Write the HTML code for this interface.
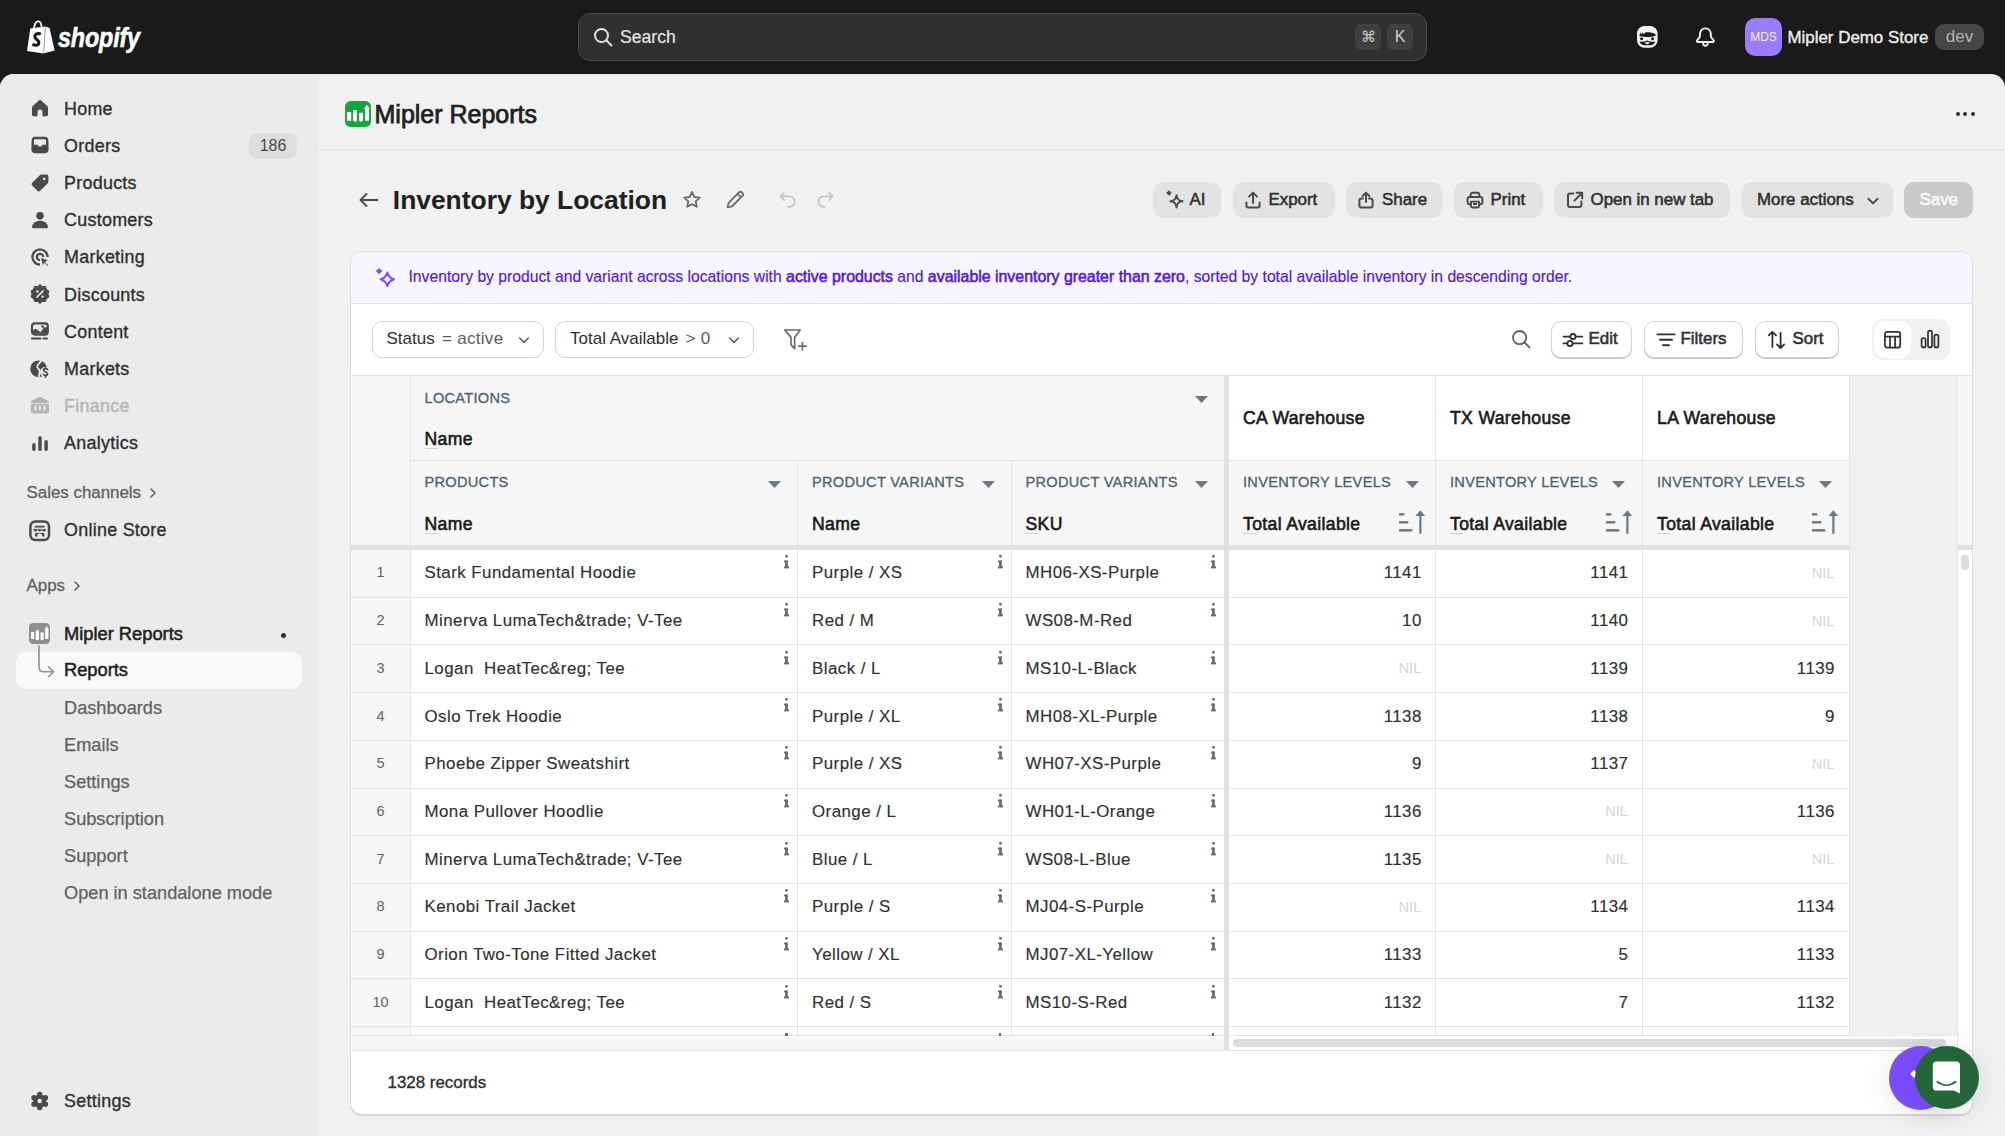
<!DOCTYPE html>
<html><head><meta charset="utf-8">
<style>
*{box-sizing:border-box;margin:0;padding:0}
html,body{width:2005px;height:1136px;overflow:hidden;background:#1a1a1a;font-family:"Liberation Sans",sans-serif;color:#303030}
.a{position:absolute;white-space:nowrap}
svg{display:block}
#top{position:absolute;left:0;top:0;width:2005px;height:74px;background:#1a1a1a}
#frame{position:absolute;left:0;top:74px;width:2005px;height:1062px;background:#f1f1f1;border-radius:14px 14px 0 0;overflow:hidden;box-shadow:inset 0 2px 3px rgba(0,0,0,0.035)}
#side{position:absolute;left:0;top:0;width:318px;height:1062px;background:#ebebeb}
.nav{position:absolute;left:64px;font-size:17.9px;letter-spacing:0.28px;color:#303030;line-height:20px;-webkit-text-stroke:0.35px currentColor}
.nav.b{font-size:18.3px;letter-spacing:0;-webkit-text-stroke:0.5px currentColor;color:#202020}
.sub{position:absolute;left:64px;font-size:18.2px;color:#616161;line-height:20px;-webkit-text-stroke:0.25px currentColor}
.ico{position:absolute;left:30px}
.btn{position:absolute;top:182px;height:36px;border-radius:10px;background:#e3e3e3}
.btn span{position:absolute;top:8px;font-size:16.9px;color:#303030;line-height:20px;white-space:nowrap;-webkit-text-stroke:0.55px currentColor}
.pill{position:absolute;top:321px;height:37px;border-radius:10px;background:#fff;border:1px solid #d4d4d4}
.pill>span{position:absolute;top:6.8px;font-size:17px;color:#303030;line-height:20px;white-space:nowrap}
.pill>span>span{margin-left:2.5px;color:#5c5c5c;letter-spacing:0.3px}
.obtn{position:absolute;top:321px;height:36.5px;border-radius:10px;background:#fff;border:1px solid #d4d4d4;box-shadow:0 1px 0 #bdbdbd}
.obtn>span{position:absolute;top:7px;font-size:16.9px;color:#303030;line-height:20px;white-space:nowrap;-webkit-text-stroke:0.55px currentColor}
#banner b{font-weight:400;font-size:15.9px;-webkit-text-stroke:0.55px currentColor}
</style></head><body>
<div id="top">
  <!-- logo -->
  <svg class="a" style="left:26px;top:20px" width="30" height="34" viewBox="0 0 30 34">
    <path d="M1 31 L4.2 9.2 C4.4 8.6 4.8 8.3 5.4 8.2 L19.4 6.4 L23.6 8 L28.6 30.6 L17.4 33.6 Z" fill="#fff"/>
    <path d="M19.4 6.6 L17.6 33.4" stroke="#9a9a9a" stroke-width="1"/>
    <path d="M7.8 9 C8.6 3.6 10.6 1.2 12.6 1.4 C14.4 1.6 15.4 3.6 15.6 7.6" fill="none" stroke="#fff" stroke-width="1.8"/>
    <path d="M10.8 4.2 C11.4 3 12 2.6 12.6 3" fill="none" stroke="#1a1a1a" stroke-width="0.8"/>
    <path d="M14.8 14.2 C13.2 13.2 9 13.2 8.8 16.4 C8.6 19.6 13.2 19.6 12.8 23 C12.5 25.6 9.2 25.8 6.4 24.2" fill="none" stroke="#1a1a1a" stroke-width="3"/>
  </svg>
  <div class="a" style="left:58px;top:21.5px;font-size:27.5px;line-height:normal;font-weight:700;font-style:italic;color:#fff;letter-spacing:-0.2px;transform:scaleX(0.85);transform-origin:0 0;-webkit-text-stroke:0.6px #fff">shopify</div>
  <!-- search -->
  <div class="a" style="left:578px;top:13px;width:849px;height:48px;border-radius:12px;background:#303030;border:1.5px solid #4a4a4a"></div>
  <svg class="a" style="left:593px;top:27px" width="20" height="20" viewBox="0 0 20 20"><circle cx="8.5" cy="8.5" r="6.5" fill="none" stroke="#e3e3e3" stroke-width="2"/><path d="M13.3 13.3 L18.5 18.5" stroke="#e3e3e3" stroke-width="2" stroke-linecap="round"/></svg>
  <div class="a" style="left:620px;top:27.2px;font-size:17.6px;color:#e3e3e3;line-height:20px;-webkit-text-stroke:0.2px currentColor">Search</div>
  <div class="a" style="left:1355px;top:24px;width:26px;height:26px;border-radius:6px;background:#3f3f3f;color:#cfcfcf;font-size:15px;text-align:center;line-height:26px">&#8984;</div>
  <div class="a" style="left:1387px;top:24px;width:26px;height:26px;border-radius:6px;background:#3f3f3f;color:#cfcfcf;font-size:16px;text-align:center;line-height:26px">K</div>
  <!-- right icons -->
  <svg class="a" style="left:1636.5px;top:26px" width="21" height="22" viewBox="0 0 21 22">
    <rect x="0" y="0" width="20.6" height="21.8" rx="7.5" fill="#f2f2f2"/>
    <path d="M2.3 10 L3.2 6.6 L4.4 8.4 L5.6 6.4 L6.6 8.2 L8.4 6.4 C12 6.2 16 6.6 18.4 8 L18.6 9.8 C16 10.8 13.4 11.2 10.6 11 C7.6 10.8 5 10.6 2.3 10Z" fill="#1a1a1a"/>
    <circle cx="4.6" cy="12.8" r="1.5" fill="#1a1a1a"/><circle cx="15.6" cy="12.8" r="1.5" fill="#1a1a1a"/>
    <path d="M2.6 15.4 C5.6 16 8 15.6 10.3 14.4 C12.6 15.6 15 16 18 15.4 C17.6 18.4 15 19.2 10.3 19.2 C5.6 19.2 3 18.4 2.6 15.4Z" fill="#1a1a1a"/>
    <path d="M7.8 16.6 Q10.3 15.6 12.8 16.6 Q12 18.2 10.3 18.2 Q8.6 18.2 7.8 16.6Z" fill="#f2f2f2"/>
  </svg>
  <svg class="a" style="left:1694px;top:26px" width="23" height="23" viewBox="0 0 23 23">
    <path d="M11.4 2.4 C8 2.4 6 5 6 8.4 L6 9.4 C6 11 5.4 12 4.2 13.2 L3.4 14 C2.4 15 2.9 16 4.2 16 L18.6 16 C19.9 16 20.4 15 19.4 14 L18.6 13.2 C17.4 12 16.8 11 16.8 9.4 L16.8 8.4 C16.8 5 14.8 2.4 11.4 2.4Z" fill="none" stroke="#f2f2f2" stroke-width="1.9" stroke-linejoin="round"/>
    <path d="M8.9 16.6 C8.9 18.6 10 19.8 11.4 19.8 C12.8 19.8 13.9 18.6 13.9 16.6" fill="none" stroke="#f2f2f2" stroke-width="1.9"/>
  </svg>
  <div class="a" style="left:1745px;top:18px;width:37px;height:38px;border-radius:10px;background:#9a7cff;color:#f4f0ff;font-size:12px;text-align:center;line-height:39px">MDS</div>
  <div class="a" style="left:1787.5px;top:28px;font-size:16.9px;color:#f0f0f0;line-height:20px;-webkit-text-stroke:0.35px currentColor">Mipler Demo Store</div>
  <div class="a" style="left:1935px;top:24px;width:49px;height:26px;border-radius:9px;background:#464646;color:#b5b5b5;font-size:17px;text-align:center;line-height:25px">dev</div>
</div>

<div id="frame">
 <div id="side">
<div class="nav" style="top:24.5px;color:#303030">Home</div>
<svg class="ico" style="top:24.2px" width="20" height="20" viewBox="0 0 20 20"><path d="M10 1.6 L17.2 8 C17.7 8.4 18 9 18 9.7 L18 16.6 C18 17.5 17.3 18.2 16.4 18.2 L12.4 18.2 L12.4 13.8 C12.4 12.5 11.4 11.6 10 11.6 C8.6 11.6 7.6 12.5 7.6 13.8 L7.6 18.2 L3.6 18.2 C2.7 18.2 2 17.5 2 16.6 L2 9.7 C2 9 2.3 8.4 2.8 8 Z" fill="#4a4a4a"/></svg>
<div class="nav" style="top:61.7px;color:#303030">Orders</div>
<svg class="ico" style="top:61.4px" width="20" height="20" viewBox="0 0 20 20"><path d="M5 1.8 L15 1.8 C16.8 1.8 18.2 3.2 18.4 5 L18.6 14.6 C18.6 16.7 17 18.3 15 18.3 L5 18.3 C3 18.3 1.4 16.7 1.4 14.6 L1.6 5 C1.8 3.2 3.2 1.8 5 1.8Z M4 9.8 L7.6 9.8 L8.8 11.6 L11.2 11.6 L12.4 9.8 L16 9.8 L16 5.6 C16 4.8 15.4 4.2 14.6 4.2 L5.4 4.2 C4.6 4.2 4 4.8 4 5.6Z" fill="#4a4a4a" fill-rule="evenodd"/></svg>
<div class="nav" style="top:98.9px;color:#303030">Products</div>
<svg class="ico" style="top:98.6px" width="20" height="20" viewBox="0 0 20 20"><path d="M11.4 1.6 L16.6 1.6 C17.6 1.6 18.4 2.4 18.4 3.4 L18.4 8.6 C18.4 9.3 18.1 9.9 17.6 10.4 L10.2 17.8 C9.4 18.6 8.2 18.6 7.4 17.8 L2.2 12.6 C1.4 11.8 1.4 10.6 2.2 9.8 L9.6 2.4 C10.1 1.9 10.7 1.6 11.4 1.6Z M14.2 4.6 A1.2 1.2 0 1 0 14.21 4.6Z" fill="#4a4a4a" fill-rule="evenodd"/></svg>
<div class="nav" style="top:136.1px;color:#303030">Customers</div>
<svg class="ico" style="top:135.8px" width="20" height="20" viewBox="0 0 20 20"><circle cx="10" cy="5.8" r="3.7" fill="#4a4a4a"/><path d="M2 16.8 C2.6 13 6 10.8 10 10.8 C14 10.8 17.4 13 18 16.8 C18.1 17.6 17.6 18.2 16.8 18.2 L3.2 18.2 C2.4 18.2 1.9 17.6 2 16.8Z" fill="#4a4a4a"/></svg>
<div class="nav" style="top:173.3px;color:#303030">Marketing</div>
<svg class="ico" style="top:173.0px" width="20" height="20" viewBox="0 0 20 20"><path d="M10 17.6 A7.6 7.6 0 1 1 17.6 10" fill="none" stroke="#4a4a4a" stroke-width="2.3"/><path d="M10 13.2 A3.2 3.2 0 1 1 13.2 10" fill="none" stroke="#4a4a4a" stroke-width="2.3"/><path d="M10 10 L19.8 13.4 L15.8 15 L19.2 18.4 L17.8 19.8 L14.4 16.4 L12.8 20.2Z" fill="#4a4a4a" stroke="#ebebeb" stroke-width="1.2" stroke-linejoin="round"/></svg>
<div class="nav" style="top:210.5px;color:#303030">Discounts</div>
<svg class="ico" style="top:210.2px" width="20" height="20" viewBox="0 0 20 20"><path d="M10 0.6 L12.4 2.6 L15.5 2.4 L16.3 5.3 L19 7 L17.9 10 L19 13 L16.3 14.7 L15.5 17.6 L12.4 17.4 L10 19.4 L7.6 17.4 L4.5 17.6 L3.7 14.7 L1 13 L2.1 10 L1 7 L3.7 5.3 L4.5 2.4 L7.6 2.6Z" fill="#4a4a4a" stroke="#4a4a4a" stroke-width="1" stroke-linejoin="round"/><path d="M7 13 L13 7" stroke="#ebebeb" stroke-width="1.7" stroke-linecap="round"/><circle cx="7.4" cy="7.4" r="1.2" fill="#ebebeb"/><circle cx="12.6" cy="12.6" r="1.2" fill="#ebebeb"/></svg>
<div class="nav" style="top:247.7px;color:#303030">Content</div>
<svg class="ico" style="top:247.4px;left:30px" width="20" height="20" viewBox="0 0 20 20"><rect x="2" y="2.4" width="15.8" height="11.2" rx="2.8" fill="none" stroke="#4a4a4a" stroke-width="2.2"/><path d="M2.6 12.8 L2.6 9.8 Q4.6 6.6 7.4 8.8 L10.4 11.2 L13.8 6.8 Q15.4 5.2 17.2 7.2 L17.2 12.8Z" fill="#4a4a4a"/><circle cx="12.6" cy="5.6" r="1.3" fill="#4a4a4a"/><rect x="0.9" y="16.4" width="10.6" height="2" rx="1" fill="#4a4a4a"/><rect x="12.4" y="16.4" width="5.6" height="2" rx="1" fill="#4a4a4a"/></svg>
<div class="nav" style="top:284.9px;color:#303030">Markets</div>
<svg class="ico" style="top:284.6px;left:30px" width="20" height="20" viewBox="0 0 20 20"><circle cx="8.6" cy="9.8" r="8.4" fill="#4a4a4a"/><path d="M11.6 1.6 C10 3.6 8.6 4.6 7.4 6.6 C6.4 8.4 8.6 9.4 9.4 11 C10.4 13 9 15.2 8.8 18.4" fill="none" stroke="#ebebeb" stroke-width="1.8"/><circle cx="15.4" cy="13.2" r="5.4" fill="#ebebeb"/><path d="M17.6 10.6 C17.2 10 16.4 9.7 15.5 9.7 C14.4 9.7 13.6 10.3 13.6 11.2 C13.6 13.3 17.6 12.6 17.6 14.8 C17.6 15.8 16.7 16.4 15.5 16.4 C14.5 16.4 13.7 16 13.3 15.4 M15.5 8.2 L15.5 9.7 M15.5 16.4 L15.5 18.2" fill="none" stroke="#4a4a4a" stroke-width="1.7" stroke-linecap="round"/></svg>
<div class="nav" style="top:322.1px;color:#b5b5b5">Finance</div>
<svg class="ico" style="top:321.8px;left:30px" width="20" height="20" viewBox="0 0 20 20"><path d="M9.9 0.8 L18.4 5 C18.8 5.2 19 5.6 19 6 L19 7 L0.8 7 L0.8 6 C0.8 5.6 1 5.2 1.4 5Z" fill="#b3b3b3"/><rect x="0.8" y="7.8" width="18.2" height="9.6" rx="2.2" fill="#b3b3b3"/><rect x="4.4" y="9.6" width="2.1" height="4.8" rx="0.6" fill="#ebebeb"/><rect x="8.85" y="9.6" width="2.1" height="4.8" rx="0.6" fill="#ebebeb"/><rect x="13.3" y="9.6" width="2.1" height="4.8" rx="0.6" fill="#ebebeb"/></svg>
<div class="nav" style="top:359.3px;color:#303030">Analytics</div>
<svg class="ico" style="top:359.0px" width="20" height="20" viewBox="0 0 20 20"><rect x="2.2" y="10" width="3.4" height="8" rx="1.7" fill="#4a4a4a"/><rect x="8.3" y="3" width="3.4" height="15" rx="1.7" fill="#4a4a4a"/><rect x="14.4" y="7" width="3.4" height="11" rx="1.7" fill="#4a4a4a"/></svg>
<div class="a" style="left:249px;top:59px;width:48px;height:26px;border-radius:9px;background:#dedede;color:#4a4a4a;font-size:16px;text-align:center;line-height:26px">186</div>
<div class="a" style="left:26.5px;top:410.1px;font-size:16.9px;color:#616161;line-height:18px;-webkit-text-stroke:0.3px currentColor">Sales channels</div>
<svg class="a" style="left:148px;top:412.6px" width="10" height="12" viewBox="0 0 10 12"><path d="M3 2 L7 6 L3 10" fill="none" stroke="#616161" stroke-width="1.6" stroke-linecap="round" stroke-linejoin="round"/></svg>
<div class="nav" style="top:445.8px">Online Store</div>
<svg class="ico" style="top:445.5px;left:29px" width="22" height="22" viewBox="0 0 22 22"><rect x="1.4" y="1.4" width="18.6" height="18.6" rx="5" fill="none" stroke="#4a4a4a" stroke-width="2.5"/><path d="M6.4 5.8 L15 5.8 L16.2 7.6 L5.2 7.6Z" fill="#4a4a4a"/><path d="M4.6 9.4 L8.2 9.4 Q8 11.2 6.4 11.2 Q4.8 11.2 4.6 9.4Z M9 9.4 L12.4 9.4 Q12.2 11.2 10.7 11.2 Q9.2 11.2 9 9.4Z M13.2 9.4 L16.8 9.4 Q16.6 11.2 15 11.2 Q13.4 11.2 13.2 9.4Z" fill="#4a4a4a" stroke="#4a4a4a" stroke-width="0.8"/><path d="M6 13.4 Q8 12 10.7 13.2 Q13.4 12 15.4 13.4 L15.4 16.6 L13 16.6 L13 14.8 Q13 13.8 10.7 13.8 Q8.4 13.8 8.4 14.8 L8.4 16.6 L6 16.6Z" fill="#4a4a4a"/></svg>
<div class="a" style="left:26.5px;top:503.0px;font-size:16.9px;color:#616161;line-height:18px;-webkit-text-stroke:0.3px currentColor">Apps</div>
<svg class="a" style="left:72px;top:505.5px" width="10" height="12" viewBox="0 0 10 12"><path d="M3 2 L7 6 L3 10" fill="none" stroke="#616161" stroke-width="1.6" stroke-linecap="round" stroke-linejoin="round"/></svg>
<div class="a" style="left:16px;top:578.3px;width:286px;height:37px;border-radius:10px;background:#fafafa"></div>
<div class="nav b" style="top:549.8px">Mipler Reports</div>
<svg class="ico" style="top:549px;left:29px" width="21" height="21" viewBox="0 0 21 21"><rect x="0" y="0" width="21" height="21" rx="4.2" fill="#8e8e8e"/><rect x="2" y="9.1" width="3.2" height="6.9" fill="#fff"/><path d="M6.7 7.2 L10 7.2 L10 16.6 L8.4 17.4 L6.7 16.6Z" fill="#fff"/><path d="M11.5 9.6 L14.7 9.6 L14.7 16.6 L13 17.4 L11.5 16.6Z" fill="#fff"/><rect x="16.1" y="7" width="3.3" height="9" fill="#fff"/><path d="M15.3 7.6 L17.75 3 L20.2 7.6Z" fill="#fff"/></svg>
<div class="a" style="left:281px;top:558.5px;width:5px;height:5px;border-radius:50%;background:#303030"></div>
<svg class="a" style="left:37px;top:571px" width="24" height="36" viewBox="0 0 24 36"><path d="M2 1 L2 22 C2 25 3.6 26.8 6.6 26.8 L16.4 26.8 M11.6 21.8 L16.6 26.8 L11.6 31.8" fill="none" stroke="#8f8f8f" stroke-width="1.6" stroke-linecap="round" stroke-linejoin="round"/></svg>
<div class="nav b" style="top:586.4px">Reports</div>
<div class="sub" style="top:623.8px">Dashboards</div>
<div class="sub" style="top:660.9px">Emails</div>
<div class="sub" style="top:698.0px">Settings</div>
<div class="sub" style="top:735.1px">Subscription</div>
<div class="sub" style="top:772.2px">Support</div>
<div class="sub" style="top:809.3px">Open in standalone mode</div>
<div class="nav" style="top:1017.3px">Settings</div>
<svg class="ico" style="top:1017.4px;left:30px" width="20" height="20" viewBox="0 0 20 20"><circle cx="9.7" cy="10" r="6.6" fill="#4a4a4a"/><circle cx="9.70" cy="3.40" r="2.7" fill="#4a4a4a"/><circle cx="3.98" cy="6.70" r="2.7" fill="#4a4a4a"/><circle cx="3.98" cy="13.30" r="2.7" fill="#4a4a4a"/><circle cx="9.70" cy="16.60" r="2.7" fill="#4a4a4a"/><circle cx="15.42" cy="13.30" r="2.7" fill="#4a4a4a"/><circle cx="15.42" cy="6.70" r="2.7" fill="#4a4a4a"/><circle cx="9.7" cy="10" r="2.2" fill="#ebebeb"/></svg>
 </div>
</div>

<div id="main">
<!-- app header -->
<svg class="a" style="left:345px;top:101px" width="26" height="26" viewBox="0 0 26 26"><rect x="0" y="0" width="26" height="26" rx="5.6" fill="#12a63c"/><rect x="1.9" y="11" width="4.3" height="8.7" fill="#fff"/><path d="M8 8.9 L12 8.9 L12 20 L10.3 21 L8 19.8Z" fill="#fff"/><path d="M14.2 11.7 L17.9 11.7 L17.9 19.8 L15.8 21 L14.2 20Z" fill="#fff"/><rect x="20" y="6.8" width="4" height="12.9" fill="#fff"/><path d="M18.8 7.8 L21.9 3.7 L25 7.8Z" fill="#fff"/></svg>
<div class="a" style="left:374.5px;top:99.5px;font-size:25px;color:#202020;line-height:28px;-webkit-text-stroke:0.75px currentColor">Mipler Reports</div>
<div class="a" style="left:1955.9px;top:111.9px;width:4px;height:4px;border-radius:50%;background:#303030"></div>
<div class="a" style="left:1963.2px;top:111.9px;width:4px;height:4px;border-radius:50%;background:#303030"></div>
<div class="a" style="left:1970.5px;top:111.9px;width:4px;height:4px;border-radius:50%;background:#303030"></div>
<div class="a" style="left:318px;top:149px;width:1687px;height:1px;background:#e3e3e3"></div>
<!-- title row -->
<svg class="a" style="left:358px;top:190px" width="22" height="20" viewBox="0 0 22 20"><path d="M19.5 10 L2.5 10 M8.5 4 L2.5 10 L8.5 16" fill="none" stroke="#4a4a4a" stroke-width="1.9" stroke-linecap="round" stroke-linejoin="round"/></svg>
<div class="a" style="left:392.8px;top:185px;font-size:26.4px;font-weight:700;color:#202020;line-height:30px">Inventory by Location</div>
<svg class="a" style="left:682px;top:190px" width="20" height="20" viewBox="0 0 20 20"><path d="M10 2 L12.3 7 L17.7 7.6 L13.7 11.3 L14.8 16.8 L10 14.1 L5.2 16.8 L6.3 11.3 L2.3 7.6 L7.7 7 Z" fill="none" stroke="#6b6b6b" stroke-width="1.8" stroke-linejoin="round"/></svg>
<svg class="a" style="left:725px;top:190px" width="20" height="20" viewBox="0 0 20 20"><path d="M13.6 2.6 C14.6 1.6 16.2 1.6 17.2 2.6 C18.2 3.6 18.2 5.2 17.2 6.2 L7.4 16 C7 16.4 6.6 16.6 6.1 16.7 L2.6 17.4 L3.3 13.9 C3.4 13.4 3.6 13 4 12.6Z M12.4 3.8 L16 7.4" fill="none" stroke="#6b6b6b" stroke-width="1.8" stroke-linejoin="round"/></svg>
<svg class="a" style="left:778px;top:190px" width="20" height="20" viewBox="0 0 20 20"><path d="M5.8 3 L2.6 6.4 L5.8 9.8 M2.8 6.4 L11.4 6.4 C14.4 6.4 16.6 8.6 16.6 11.6 C16.6 14.6 14.4 16.8 11.4 16.8 L10.4 16.8" fill="none" stroke="#c4c4c4" stroke-width="1.8" stroke-linecap="round" stroke-linejoin="round"/></svg>
<svg class="a" style="left:815px;top:190px" width="20" height="20" viewBox="0 0 20 20"><path d="M14.2 3 L17.4 6.4 L14.2 9.8 M17.2 6.4 L8.6 6.4 C5.6 6.4 3.4 8.6 3.4 11.6 C3.4 14.6 5.6 16.8 8.6 16.8 L9.6 16.8" fill="none" stroke="#c4c4c4" stroke-width="1.8" stroke-linecap="round" stroke-linejoin="round"/></svg>

<!-- action buttons -->
<div class="btn" style="left:1152.5px;width:68px"><svg width="20" height="22" viewBox="0 0 20 22" style="position:absolute;left:12px;top:7px"><path d="M4 1.2 L6.8 4 L4 6.8 L1.2 4Z" fill="#4a4a4a"/><path d="M11.5 6.2 C12 10.4 13.4 11.8 17.6 12.3 C13.4 12.8 12 14.2 11.5 18.4 C11 14.2 9.6 12.8 5.4 12.3 C9.6 11.8 11 10.4 11.5 6.2Z" fill="none" stroke="#4a4a4a" stroke-width="2" stroke-linejoin="round"/></svg><span style="left:37px">AI</span></div>
<div class="btn" style="left:1232.5px;width:102px"><svg width="20" height="20" viewBox="0 0 20 20" style="position:absolute;left:10px;top:8px"><path d="M10 13 L10 3 M6 6.6 L10 2.6 L14 6.6 M3.4 12.6 L3.4 15.4 C3.4 16.6 4.2 17.4 5.4 17.4 L14.6 17.4 C15.8 17.4 16.6 16.6 16.6 15.4 L16.6 12.6" fill="none" stroke="#4a4a4a" stroke-width="2" stroke-linecap="round" stroke-linejoin="round"/></svg><span style="left:36px">Export</span></div>
<div class="btn" style="left:1346px;width:96.5px"><svg width="20" height="20" viewBox="0 0 20 20" style="position:absolute;left:10px;top:8px"><path d="M10 12 L10 2.8 M6.6 6 L10 2.6 L13.4 6 M7 8.6 L5.4 8.6 C4.2 8.6 3.4 9.4 3.4 10.6 L3.4 15.4 C3.4 16.6 4.2 17.4 5.4 17.4 L14.6 17.4 C15.8 17.4 16.6 16.6 16.6 15.4 L16.6 10.6 C16.6 9.4 15.8 8.6 14.6 8.6 L13 8.6" fill="none" stroke="#4a4a4a" stroke-width="2" stroke-linecap="round" stroke-linejoin="round"/></svg><span style="left:36px">Share</span></div>
<div class="btn" style="left:1453.5px;width:89px"><svg width="20" height="20" viewBox="0 0 20 20" style="position:absolute;left:11px;top:8px"><path d="M5.6 7 L5.6 4.8 C5.6 3.6 6.4 2.8 7.6 2.8 L12.4 2.8 C13.6 2.8 14.4 3.6 14.4 4.8 L14.4 7 M5.6 14.2 L4.4 14.2 C3.2 14.2 2.6 13.4 2.6 12.2 L2.6 9.2 C2.6 8 3.4 7 4.6 7 L15.4 7 C16.6 7 17.4 8 17.4 9.2 L17.4 12.2 C17.4 13.4 16.8 14.2 15.6 14.2 L14.4 14.2 M6 11.6 L14 11.6 L14 16 C14 16.8 13.4 17.4 12.6 17.4 L7.4 17.4 C6.6 17.4 6 16.8 6 16Z M8 14 L12 14" fill="none" stroke="#4a4a4a" stroke-width="1.95" stroke-linejoin="round"/></svg><span style="left:37px">Print</span></div>
<div class="btn" style="left:1553.5px;width:176px"><svg width="20" height="20" viewBox="0 0 20 20" style="position:absolute;left:11px;top:8px"><path d="M8.4 3.6 L5 3.6 C3.8 3.6 3 4.4 3 5.6 L3 15 C3 16.2 3.8 17 5 17 L14.4 17 C15.6 17 16.4 16.2 16.4 15 L16.4 11.6 M11.6 2.8 L17.2 2.8 L17.2 8.4 M17 3 L9.4 10.6" fill="none" stroke="#4a4a4a" stroke-width="2" stroke-linecap="round" stroke-linejoin="round"/></svg><span style="left:37px">Open in new tab</span></div>
<div class="btn" style="left:1741px;width:151.5px"><span style="left:16px">More actions</span><svg width="16" height="16" viewBox="0 0 16 16" style="position:absolute;left:124px;top:11px"><path d="M3.4 5.8 L8 10.4 L12.6 5.8" fill="none" stroke="#4a4a4a" stroke-width="2" stroke-linecap="round" stroke-linejoin="round"/></svg></div>
<div class="btn" style="left:1904px;width:69px;background:#c9c9c9;color:#fff"><span style="left:15.5px;color:#fafafa">Save</span></div>

<!-- card -->
<div class="a" style="left:350px;top:251px;width:1623px;height:864px;border-radius:12px;background:#fff;border:1px solid #dedede;box-shadow:0 1px 0 #d4d4d4;overflow:hidden">
  <div class="a" style="left:0;top:0;width:1621px;height:52px;background:#f7f5ff;border-bottom:1px solid #e1e1e1"></div>
</div>
<svg class="a" style="left:370px;top:262px" width="28" height="28" viewBox="0 0 28 28"><path d="M9.1 5.9 L12.3 9.1 L9.1 12.3 L5.9 9.1Z" fill="#7b4dff"/><path d="M17.3 10.4 Q18.6 15.6 24 17.2 Q18.6 18.8 17.3 24 Q16 18.8 10.6 17.2 Q16 15.6 17.3 10.4Z" fill="none" stroke="#7b4dff" stroke-width="2" stroke-linejoin="round"/></svg>
<div class="a" id="banner" style="left:408.5px;top:268px;font-size:15.7px;color:#5417dc;line-height:18px;-webkit-text-stroke:0.15px currentColor">Inventory by product and variant across locations with <b>active products</b> and <b>available inventory greater than zero</b>, sorted by total available inventory in descending order.</div>
<!-- filter pills -->
<div class="pill" style="left:371.5px;width:172.5px"><span style="left:14px">Status <span style="position:static">= active</span></span><svg width="16" height="16" viewBox="0 0 16 16" style="position:absolute;left:143px;top:10px"><path d="M3.6 6 L8 10.4 L12.4 6" fill="none" stroke="#616161" stroke-width="1.6" stroke-linecap="round" stroke-linejoin="round"/></svg></div>
<div class="pill" style="left:555px;width:199px"><span style="left:14px">Total Available <span style="position:static">&gt; 0</span></span><svg width="16" height="16" viewBox="0 0 16 16" style="position:absolute;left:170px;top:10px"><path d="M3.6 6 L8 10.4 L12.4 6" fill="none" stroke="#616161" stroke-width="1.6" stroke-linecap="round" stroke-linejoin="round"/></svg></div>
<svg class="a" style="left:782px;top:327px" width="26" height="26" viewBox="0 0 26 26"><path d="M2.8 3 L18.2 3 L12.6 10.4 L12.6 21.6 L9 17.8 L9 10.4Z" fill="none" stroke="#6b6b6b" stroke-width="1.7" stroke-linejoin="round"/><path d="M20.4 15 L20.4 23.4 M16.2 19.2 L24.6 19.2" stroke="#6b6b6b" stroke-width="1.7"/></svg>
<!-- right controls -->
<svg class="a" style="left:1510px;top:328px" width="22" height="22" viewBox="0 0 22 22"><circle cx="9.6" cy="9.6" r="6.6" fill="none" stroke="#616161" stroke-width="1.8"/><path d="M14.4 14.4 L19.4 19.4" stroke="#616161" stroke-width="1.8" stroke-linecap="round"/></svg>
<div class="obtn" style="left:1550.5px;width:81px"><svg width="22" height="22" viewBox="0 0 22 22" style="position:absolute;left:10px;top:7px"><path d="M1.6 7.6 L8 7.6 M13.8 7.6 L20.4 7.6 M1.6 14.4 L5 14.4 M10.8 14.4 L20.4 14.4" stroke="#303030" stroke-width="1.8" stroke-linecap="round"/><circle cx="11" cy="7.6" r="2.6" fill="none" stroke="#303030" stroke-width="1.8"/><circle cx="8" cy="14.4" r="2.6" fill="none" stroke="#303030" stroke-width="1.8"/></svg><span style="left:37px">Edit</span></div>
<div class="obtn" style="left:1643.5px;width:99px"><svg width="22" height="22" viewBox="0 0 22 22" style="position:absolute;left:10px;top:7px"><path d="M2.4 5.4 L19.6 5.4 M5 10.8 L17 10.8 M8 16.2 L14 16.2" stroke="#303030" stroke-width="1.9" stroke-linecap="round"/></svg><span style="left:36px">Filters</span></div>
<div class="obtn" style="left:1754.5px;width:84px"><svg width="22" height="22" viewBox="0 0 22 22" style="position:absolute;left:10.5px;top:7px"><path d="M6.4 18 L6.4 2.8 M2.8 6.4 L6.4 2.8 L10 6.4 M14.6 3.8 L14.6 19 M11 15.4 L14.6 19 L18.2 15.4" fill="none" stroke="#303030" stroke-width="1.8" stroke-linecap="round" stroke-linejoin="round"/></svg><span style="left:37px">Sort</span></div>
<div class="a" style="left:1871.5px;top:318.5px;width:78.5px;height:41.5px;border-radius:11px;background:#f1f1f1"></div>
<div class="a" style="left:1873.5px;top:320.5px;width:37.5px;height:37.5px;border-radius:10px;background:#fff"></div>
<svg class="a" style="left:1881px;top:328px" width="22" height="22" viewBox="0 0 22 22"><rect x="3.9" y="3.9" width="15.3" height="15.6" rx="2.3" fill="none" stroke="#303030" stroke-width="1.75"/><path d="M3.9 8.6 L19.2 8.6 M9 8.6 L9 19.5 M14.1 8.6 L14.1 19.5" stroke="#303030" stroke-width="1.75"/></svg>
<svg class="a" style="left:1919px;top:328px" width="22" height="22" viewBox="0 0 22 22"><rect x="2.6" y="10" width="4" height="9.4" rx="2" fill="none" stroke="#303030" stroke-width="1.7"/><rect x="9" y="2.6" width="4" height="16.8" rx="2" fill="none" stroke="#303030" stroke-width="1.7"/><rect x="15.4" y="6.6" width="4" height="12.8" rx="2" fill="none" stroke="#303030" stroke-width="1.7"/></svg>
<!--TABLE-->
<div class="a" style="left:351px;top:376px;width:873px;height:169px;background:#f7f7f7;"></div>
<div class="a" style="left:1229px;top:461px;width:620px;height:84px;background:#f7f7f7;"></div>
<div class="a" style="left:1849px;top:376px;width:109px;height:660px;background:#f0f0f0;"></div>
<div class="a" style="left:1958px;top:376px;width:14px;height:169px;background:#f7f7f7;"></div>
<div class="a" style="left:351px;top:550px;width:59px;height:486px;background:#f7f7f7;"></div>
<div class="a" style="left:351px;top:1036px;width:873px;height:14px;background:#f7f7f7;"></div>
<div class="a" style="left:351px;top:375px;width:1621px;height:1px;background:#e3e3e3;"></div>
<div class="a" style="left:410px;top:376px;width:1px;height:660px;background:#e3e3e3;"></div>
<div class="a" style="left:411px;top:460px;width:813px;height:1px;background:#e3e3e3;"></div>
<div class="a" style="left:1229px;top:460px;width:620px;height:1px;background:#e3e3e3;"></div>
<div class="a" style="left:797px;top:461px;width:1px;height:575px;background:#e3e3e3;"></div>
<div class="a" style="left:1011px;top:461px;width:1px;height:575px;background:#e3e3e3;"></div>
<div class="a" style="left:1224px;top:376px;width:5px;height:674px;background:#e1e1e1;"></div>
<div class="a" style="left:1435px;top:376px;width:1px;height:660px;background:#e3e3e3;"></div>
<div class="a" style="left:1642px;top:376px;width:1px;height:660px;background:#e3e3e3;"></div>
<div class="a" style="left:1849px;top:376px;width:1px;height:660px;background:#e3e3e3;"></div>
<div class="a" style="left:1957px;top:376px;width:1px;height:674px;background:#e6e6e6;"></div>
<div class="a" style="left:351px;top:545px;width:1498px;height:5px;background:#e1e1e1;"></div>
<div class="a" style="left:1958px;top:545px;width:14px;height:5px;background:#e1e1e1;"></div>
<div class="a" style="left:351px;top:596.7px;width:1498px;height:1px;background:#e3e3e3;"></div>
<div class="a" style="left:351px;top:644.4px;width:1498px;height:1px;background:#e3e3e3;"></div>
<div class="a" style="left:351px;top:692.1px;width:1498px;height:1px;background:#e3e3e3;"></div>
<div class="a" style="left:351px;top:739.8px;width:1498px;height:1px;background:#e3e3e3;"></div>
<div class="a" style="left:351px;top:787.5px;width:1498px;height:1px;background:#e3e3e3;"></div>
<div class="a" style="left:351px;top:835.2px;width:1498px;height:1px;background:#e3e3e3;"></div>
<div class="a" style="left:351px;top:882.9px;width:1498px;height:1px;background:#e3e3e3;"></div>
<div class="a" style="left:351px;top:930.6px;width:1498px;height:1px;background:#e3e3e3;"></div>
<div class="a" style="left:351px;top:978.3px;width:1498px;height:1px;background:#e3e3e3;"></div>
<div class="a" style="left:351px;top:1026.0px;width:1498px;height:1px;background:#e3e3e3;"></div>
<div class="a" style="left:351px;top:1035px;width:1498px;height:1px;background:#e3e3e3;"></div>
<div class="a" style="left:351px;top:1050px;width:1621px;height:1px;background:#e3e3e3;"></div>
<div class="a" style="left:1233px;top:1039.3px;width:713px;height:7.8px;background:#dcdde0;border-radius:4px"></div>
<div class="a" style="left:1961.3px;top:554.5px;width:7.6px;height:15px;background:#dcdde0;border-radius:4px"></div>
<div class="a" style="left:424.5px;top:387.6px;font-size:14.6px;line-height:20px;color:#4d5f72;font-weight:400;letter-spacing:0.28px;-webkit-text-stroke:0.3px currentColor">LOCATIONS</div>
<svg class="a" style="left:1194.5px;top:396px" width="13" height="7" viewBox="0 0 13 7"><path d="M0 0 L13 0 L6.5 7Z" fill="#6d7882"/></svg>
<div class="a" style="left:424.5px;top:428.8px;font-size:17.6px;line-height:20px;color:#1a1a1a;font-weight:400;letter-spacing:0.35px;-webkit-text-stroke:0.6px currentColor">Name</div>
<div class="a" style="left:424.5px;top:447.5px;width:13px;height:1.5px;background:#d0d0d0;"></div>
<div class="a" style="left:1243px;top:408.2px;font-size:17.6px;line-height:20px;color:#1a1a1a;font-weight:400;letter-spacing:0.35px;-webkit-text-stroke:0.6px currentColor">CA Warehouse</div>
<div class="a" style="left:1450px;top:408.2px;font-size:17.6px;line-height:20px;color:#1a1a1a;font-weight:400;letter-spacing:0.35px;-webkit-text-stroke:0.6px currentColor">TX Warehouse</div>
<div class="a" style="left:1657px;top:408.2px;font-size:17.6px;line-height:20px;color:#1a1a1a;font-weight:400;letter-spacing:0.35px;-webkit-text-stroke:0.6px currentColor">LA Warehouse</div>
<div class="a" style="left:424.5px;top:472.2px;font-size:14.6px;line-height:20px;color:#4d5f72;font-weight:400;letter-spacing:0.28px;-webkit-text-stroke:0.3px currentColor">PRODUCTS</div>
<svg class="a" style="left:768.0px;top:481px" width="13" height="7" viewBox="0 0 13 7"><path d="M0 0 L13 0 L6.5 7Z" fill="#6d7882"/></svg>
<div class="a" style="left:812px;top:472.2px;font-size:14.6px;line-height:20px;color:#4d5f72;font-weight:400;letter-spacing:0.28px;-webkit-text-stroke:0.3px currentColor">PRODUCT VARIANTS</div>
<svg class="a" style="left:981.6px;top:481px" width="13" height="7" viewBox="0 0 13 7"><path d="M0 0 L13 0 L6.5 7Z" fill="#6d7882"/></svg>
<div class="a" style="left:1025.5px;top:472.2px;font-size:14.6px;line-height:20px;color:#4d5f72;font-weight:400;letter-spacing:0.28px;-webkit-text-stroke:0.3px currentColor">PRODUCT VARIANTS</div>
<svg class="a" style="left:1194.6px;top:481px" width="13" height="7" viewBox="0 0 13 7"><path d="M0 0 L13 0 L6.5 7Z" fill="#6d7882"/></svg>
<div class="a" style="left:424.5px;top:513.8px;font-size:17.6px;line-height:20px;color:#1a1a1a;font-weight:400;letter-spacing:0.35px;-webkit-text-stroke:0.6px currentColor">Name</div>
<div class="a" style="left:424.5px;top:532.5px;width:13px;height:1.5px;background:#d0d0d0;"></div>
<div class="a" style="left:812px;top:513.8px;font-size:17.6px;line-height:20px;color:#1a1a1a;font-weight:400;letter-spacing:0.35px;-webkit-text-stroke:0.6px currentColor">Name</div>
<div class="a" style="left:1025.5px;top:513.8px;font-size:17.6px;line-height:20px;color:#1a1a1a;font-weight:400;letter-spacing:0.35px;-webkit-text-stroke:0.6px currentColor">SKU</div>
<div class="a" style="left:1025.5px;top:532.5px;width:13px;height:1.5px;background:#d0d0d0;"></div>
<div class="a" style="left:1243px;top:472.2px;font-size:14.6px;line-height:20px;color:#4d5f72;font-weight:400;letter-spacing:0.28px;-webkit-text-stroke:0.3px currentColor">INVENTORY LEVELS</div>
<svg class="a" style="left:1405.6px;top:481px" width="13" height="7" viewBox="0 0 13 7"><path d="M0 0 L13 0 L6.5 7Z" fill="#6d7882"/></svg>
<div class="a" style="left:1243px;top:513.8px;font-size:17.6px;line-height:20px;color:#1a1a1a;font-weight:400;letter-spacing:0.35px;-webkit-text-stroke:0.6px currentColor">Total Available</div>
<div class="a" style="left:1243px;top:532.5px;width:13px;height:1.5px;background:#d0d0d0;"></div>
<svg class="a" style="left:1398.9px;top:510px" width="28" height="24" viewBox="0 0 28 24"><rect x="0" y="3.1" width="5.3" height="2.5" fill="#6d7882"/><rect x="0" y="11.1" width="9.3" height="2.4" fill="#6d7882"/><rect x="0" y="19.1" width="13.3" height="2.5" fill="#6d7882"/><rect x="20.3" y="4" width="2.2" height="19.7" fill="#6d7882"/><path d="M16.3 5.9 L21.4 0.3 L26.2 5.9Z" fill="#6d7882"/></svg>
<div class="a" style="left:1450px;top:472.2px;font-size:14.6px;line-height:20px;color:#4d5f72;font-weight:400;letter-spacing:0.28px;-webkit-text-stroke:0.3px currentColor">INVENTORY LEVELS</div>
<svg class="a" style="left:1612.2px;top:481px" width="13" height="7" viewBox="0 0 13 7"><path d="M0 0 L13 0 L6.5 7Z" fill="#6d7882"/></svg>
<div class="a" style="left:1450px;top:513.8px;font-size:17.6px;line-height:20px;color:#1a1a1a;font-weight:400;letter-spacing:0.35px;-webkit-text-stroke:0.6px currentColor">Total Available</div>
<div class="a" style="left:1450px;top:532.5px;width:13px;height:1.5px;background:#d0d0d0;"></div>
<svg class="a" style="left:1605.5px;top:510px" width="28" height="24" viewBox="0 0 28 24"><rect x="0" y="3.1" width="5.3" height="2.5" fill="#6d7882"/><rect x="0" y="11.1" width="9.3" height="2.4" fill="#6d7882"/><rect x="0" y="19.1" width="13.3" height="2.5" fill="#6d7882"/><rect x="20.3" y="4" width="2.2" height="19.7" fill="#6d7882"/><path d="M16.3 5.9 L21.4 0.3 L26.2 5.9Z" fill="#6d7882"/></svg>
<div class="a" style="left:1657px;top:472.2px;font-size:14.6px;line-height:20px;color:#4d5f72;font-weight:400;letter-spacing:0.28px;-webkit-text-stroke:0.3px currentColor">INVENTORY LEVELS</div>
<svg class="a" style="left:1818.9px;top:481px" width="13" height="7" viewBox="0 0 13 7"><path d="M0 0 L13 0 L6.5 7Z" fill="#6d7882"/></svg>
<div class="a" style="left:1657px;top:513.8px;font-size:17.6px;line-height:20px;color:#1a1a1a;font-weight:400;letter-spacing:0.35px;-webkit-text-stroke:0.6px currentColor">Total Available</div>
<div class="a" style="left:1657px;top:532.5px;width:13px;height:1.5px;background:#d0d0d0;"></div>
<svg class="a" style="left:1812.2px;top:510px" width="28" height="24" viewBox="0 0 28 24"><rect x="0" y="3.1" width="5.3" height="2.5" fill="#6d7882"/><rect x="0" y="11.1" width="9.3" height="2.4" fill="#6d7882"/><rect x="0" y="19.1" width="13.3" height="2.5" fill="#6d7882"/><rect x="20.3" y="4" width="2.2" height="19.7" fill="#6d7882"/><path d="M16.3 5.9 L21.4 0.3 L26.2 5.9Z" fill="#6d7882"/></svg>
<div class="a" style="left:351px;width:59px;text-align:center;top:563.4px;font-size:14.5px;line-height:18px;color:#616161">1</div>
<div class="a" style="left:424.5px;top:563.4px;font-size:16.9px;line-height:20px;color:#303030;font-weight:400;letter-spacing:0.45px;-webkit-text-stroke:0.15px currentColor;white-space:pre">Stark Fundamental Hoodie</div>
<div class="a" style="left:812px;top:563.4px;font-size:16.9px;line-height:20px;color:#303030;font-weight:400;letter-spacing:0.45px;-webkit-text-stroke:0.15px currentColor">Purple / XS</div>
<div class="a" style="left:1025.5px;top:563.4px;font-size:16.9px;line-height:20px;color:#303030;font-weight:400;letter-spacing:0.45px;-webkit-text-stroke:0.15px currentColor">MH06-XS-Purple</div>
<svg class="a" style="left:784.0px;top:555.3px" width="6" height="14" viewBox="0 0 6 14"><rect x="1.1" y="0" width="2.7" height="2.6" rx="0.8" fill="#5f6b77"/><rect x="0" y="5.6" width="3.8" height="1.7" fill="#5f6b77"/><rect x="1.1" y="5.6" width="2.7" height="7.6" fill="#5f6b77"/><rect x="0" y="11.5" width="5" height="1.8" fill="#5f6b77"/></svg>
<svg class="a" style="left:997.6px;top:555.3px" width="6" height="14" viewBox="0 0 6 14"><rect x="1.1" y="0" width="2.7" height="2.6" rx="0.8" fill="#5f6b77"/><rect x="0" y="5.6" width="3.8" height="1.7" fill="#5f6b77"/><rect x="1.1" y="5.6" width="2.7" height="7.6" fill="#5f6b77"/><rect x="0" y="11.5" width="5" height="1.8" fill="#5f6b77"/></svg>
<svg class="a" style="left:1210.6px;top:555.3px" width="6" height="14" viewBox="0 0 6 14"><rect x="1.1" y="0" width="2.7" height="2.6" rx="0.8" fill="#5f6b77"/><rect x="0" y="5.6" width="3.8" height="1.7" fill="#5f6b77"/><rect x="1.1" y="5.6" width="2.7" height="7.6" fill="#5f6b77"/><rect x="0" y="11.5" width="5" height="1.8" fill="#5f6b77"/></svg>
<div class="a" style="right:583.25px;top:563.4px;font-size:16.9px;line-height:20px;color:#303030;font-weight:400;text-align:right;letter-spacing:0.45px;-webkit-text-stroke:0.15px currentColor">1141</div>
<div class="a" style="right:376.54999999999995px;top:563.4px;font-size:16.9px;line-height:20px;color:#303030;font-weight:400;text-align:right;letter-spacing:0.45px;-webkit-text-stroke:0.15px currentColor">1141</div>
<div class="a" style="right:170.5px;top:562.9px;font-size:14.7px;line-height:20px;color:#d3d6da;font-weight:400;text-align:right;">NIL</div>
<div class="a" style="left:351px;width:59px;text-align:center;top:611.1px;font-size:14.5px;line-height:18px;color:#616161">2</div>
<div class="a" style="left:424.5px;top:611.1px;font-size:16.9px;line-height:20px;color:#303030;font-weight:400;letter-spacing:0.45px;-webkit-text-stroke:0.15px currentColor;white-space:pre">Minerva LumaTech&amp;trade; V-Tee</div>
<div class="a" style="left:812px;top:611.1px;font-size:16.9px;line-height:20px;color:#303030;font-weight:400;letter-spacing:0.45px;-webkit-text-stroke:0.15px currentColor">Red / M</div>
<div class="a" style="left:1025.5px;top:611.1px;font-size:16.9px;line-height:20px;color:#303030;font-weight:400;letter-spacing:0.45px;-webkit-text-stroke:0.15px currentColor">WS08-M-Red</div>
<svg class="a" style="left:784.0px;top:603.0px" width="6" height="14" viewBox="0 0 6 14"><rect x="1.1" y="0" width="2.7" height="2.6" rx="0.8" fill="#5f6b77"/><rect x="0" y="5.6" width="3.8" height="1.7" fill="#5f6b77"/><rect x="1.1" y="5.6" width="2.7" height="7.6" fill="#5f6b77"/><rect x="0" y="11.5" width="5" height="1.8" fill="#5f6b77"/></svg>
<svg class="a" style="left:997.6px;top:603.0px" width="6" height="14" viewBox="0 0 6 14"><rect x="1.1" y="0" width="2.7" height="2.6" rx="0.8" fill="#5f6b77"/><rect x="0" y="5.6" width="3.8" height="1.7" fill="#5f6b77"/><rect x="1.1" y="5.6" width="2.7" height="7.6" fill="#5f6b77"/><rect x="0" y="11.5" width="5" height="1.8" fill="#5f6b77"/></svg>
<svg class="a" style="left:1210.6px;top:603.0px" width="6" height="14" viewBox="0 0 6 14"><rect x="1.1" y="0" width="2.7" height="2.6" rx="0.8" fill="#5f6b77"/><rect x="0" y="5.6" width="3.8" height="1.7" fill="#5f6b77"/><rect x="1.1" y="5.6" width="2.7" height="7.6" fill="#5f6b77"/><rect x="0" y="11.5" width="5" height="1.8" fill="#5f6b77"/></svg>
<div class="a" style="right:583.25px;top:611.1px;font-size:16.9px;line-height:20px;color:#303030;font-weight:400;text-align:right;letter-spacing:0.45px;-webkit-text-stroke:0.15px currentColor">10</div>
<div class="a" style="right:376.54999999999995px;top:611.1px;font-size:16.9px;line-height:20px;color:#303030;font-weight:400;text-align:right;letter-spacing:0.45px;-webkit-text-stroke:0.15px currentColor">1140</div>
<div class="a" style="right:170.5px;top:610.6px;font-size:14.7px;line-height:20px;color:#d3d6da;font-weight:400;text-align:right;">NIL</div>
<div class="a" style="left:351px;width:59px;text-align:center;top:658.8px;font-size:14.5px;line-height:18px;color:#616161">3</div>
<div class="a" style="left:424.5px;top:658.8px;font-size:16.9px;line-height:20px;color:#303030;font-weight:400;letter-spacing:0.45px;-webkit-text-stroke:0.15px currentColor;white-space:pre">Logan  HeatTec&amp;reg; Tee</div>
<div class="a" style="left:812px;top:658.8px;font-size:16.9px;line-height:20px;color:#303030;font-weight:400;letter-spacing:0.45px;-webkit-text-stroke:0.15px currentColor">Black / L</div>
<div class="a" style="left:1025.5px;top:658.8px;font-size:16.9px;line-height:20px;color:#303030;font-weight:400;letter-spacing:0.45px;-webkit-text-stroke:0.15px currentColor">MS10-L-Black</div>
<svg class="a" style="left:784.0px;top:650.7px" width="6" height="14" viewBox="0 0 6 14"><rect x="1.1" y="0" width="2.7" height="2.6" rx="0.8" fill="#5f6b77"/><rect x="0" y="5.6" width="3.8" height="1.7" fill="#5f6b77"/><rect x="1.1" y="5.6" width="2.7" height="7.6" fill="#5f6b77"/><rect x="0" y="11.5" width="5" height="1.8" fill="#5f6b77"/></svg>
<svg class="a" style="left:997.6px;top:650.7px" width="6" height="14" viewBox="0 0 6 14"><rect x="1.1" y="0" width="2.7" height="2.6" rx="0.8" fill="#5f6b77"/><rect x="0" y="5.6" width="3.8" height="1.7" fill="#5f6b77"/><rect x="1.1" y="5.6" width="2.7" height="7.6" fill="#5f6b77"/><rect x="0" y="11.5" width="5" height="1.8" fill="#5f6b77"/></svg>
<svg class="a" style="left:1210.6px;top:650.7px" width="6" height="14" viewBox="0 0 6 14"><rect x="1.1" y="0" width="2.7" height="2.6" rx="0.8" fill="#5f6b77"/><rect x="0" y="5.6" width="3.8" height="1.7" fill="#5f6b77"/><rect x="1.1" y="5.6" width="2.7" height="7.6" fill="#5f6b77"/><rect x="0" y="11.5" width="5" height="1.8" fill="#5f6b77"/></svg>
<div class="a" style="right:583.7px;top:658.3px;font-size:14.7px;line-height:20px;color:#d3d6da;font-weight:400;text-align:right;">NIL</div>
<div class="a" style="right:376.54999999999995px;top:658.8px;font-size:16.9px;line-height:20px;color:#303030;font-weight:400;text-align:right;letter-spacing:0.45px;-webkit-text-stroke:0.15px currentColor">1139</div>
<div class="a" style="right:170.04999999999995px;top:658.8px;font-size:16.9px;line-height:20px;color:#303030;font-weight:400;text-align:right;letter-spacing:0.45px;-webkit-text-stroke:0.15px currentColor">1139</div>
<div class="a" style="left:351px;width:59px;text-align:center;top:706.5px;font-size:14.5px;line-height:18px;color:#616161">4</div>
<div class="a" style="left:424.5px;top:706.5px;font-size:16.9px;line-height:20px;color:#303030;font-weight:400;letter-spacing:0.45px;-webkit-text-stroke:0.15px currentColor;white-space:pre">Oslo Trek Hoodie</div>
<div class="a" style="left:812px;top:706.5px;font-size:16.9px;line-height:20px;color:#303030;font-weight:400;letter-spacing:0.45px;-webkit-text-stroke:0.15px currentColor">Purple / XL</div>
<div class="a" style="left:1025.5px;top:706.5px;font-size:16.9px;line-height:20px;color:#303030;font-weight:400;letter-spacing:0.45px;-webkit-text-stroke:0.15px currentColor">MH08-XL-Purple</div>
<svg class="a" style="left:784.0px;top:698.4px" width="6" height="14" viewBox="0 0 6 14"><rect x="1.1" y="0" width="2.7" height="2.6" rx="0.8" fill="#5f6b77"/><rect x="0" y="5.6" width="3.8" height="1.7" fill="#5f6b77"/><rect x="1.1" y="5.6" width="2.7" height="7.6" fill="#5f6b77"/><rect x="0" y="11.5" width="5" height="1.8" fill="#5f6b77"/></svg>
<svg class="a" style="left:997.6px;top:698.4px" width="6" height="14" viewBox="0 0 6 14"><rect x="1.1" y="0" width="2.7" height="2.6" rx="0.8" fill="#5f6b77"/><rect x="0" y="5.6" width="3.8" height="1.7" fill="#5f6b77"/><rect x="1.1" y="5.6" width="2.7" height="7.6" fill="#5f6b77"/><rect x="0" y="11.5" width="5" height="1.8" fill="#5f6b77"/></svg>
<svg class="a" style="left:1210.6px;top:698.4px" width="6" height="14" viewBox="0 0 6 14"><rect x="1.1" y="0" width="2.7" height="2.6" rx="0.8" fill="#5f6b77"/><rect x="0" y="5.6" width="3.8" height="1.7" fill="#5f6b77"/><rect x="1.1" y="5.6" width="2.7" height="7.6" fill="#5f6b77"/><rect x="0" y="11.5" width="5" height="1.8" fill="#5f6b77"/></svg>
<div class="a" style="right:583.25px;top:706.5px;font-size:16.9px;line-height:20px;color:#303030;font-weight:400;text-align:right;letter-spacing:0.45px;-webkit-text-stroke:0.15px currentColor">1138</div>
<div class="a" style="right:376.54999999999995px;top:706.5px;font-size:16.9px;line-height:20px;color:#303030;font-weight:400;text-align:right;letter-spacing:0.45px;-webkit-text-stroke:0.15px currentColor">1138</div>
<div class="a" style="right:170.04999999999995px;top:706.5px;font-size:16.9px;line-height:20px;color:#303030;font-weight:400;text-align:right;letter-spacing:0.45px;-webkit-text-stroke:0.15px currentColor">9</div>
<div class="a" style="left:351px;width:59px;text-align:center;top:754.2px;font-size:14.5px;line-height:18px;color:#616161">5</div>
<div class="a" style="left:424.5px;top:754.2px;font-size:16.9px;line-height:20px;color:#303030;font-weight:400;letter-spacing:0.45px;-webkit-text-stroke:0.15px currentColor;white-space:pre">Phoebe Zipper Sweatshirt</div>
<div class="a" style="left:812px;top:754.2px;font-size:16.9px;line-height:20px;color:#303030;font-weight:400;letter-spacing:0.45px;-webkit-text-stroke:0.15px currentColor">Purple / XS</div>
<div class="a" style="left:1025.5px;top:754.2px;font-size:16.9px;line-height:20px;color:#303030;font-weight:400;letter-spacing:0.45px;-webkit-text-stroke:0.15px currentColor">WH07-XS-Purple</div>
<svg class="a" style="left:784.0px;top:746.1px" width="6" height="14" viewBox="0 0 6 14"><rect x="1.1" y="0" width="2.7" height="2.6" rx="0.8" fill="#5f6b77"/><rect x="0" y="5.6" width="3.8" height="1.7" fill="#5f6b77"/><rect x="1.1" y="5.6" width="2.7" height="7.6" fill="#5f6b77"/><rect x="0" y="11.5" width="5" height="1.8" fill="#5f6b77"/></svg>
<svg class="a" style="left:997.6px;top:746.1px" width="6" height="14" viewBox="0 0 6 14"><rect x="1.1" y="0" width="2.7" height="2.6" rx="0.8" fill="#5f6b77"/><rect x="0" y="5.6" width="3.8" height="1.7" fill="#5f6b77"/><rect x="1.1" y="5.6" width="2.7" height="7.6" fill="#5f6b77"/><rect x="0" y="11.5" width="5" height="1.8" fill="#5f6b77"/></svg>
<svg class="a" style="left:1210.6px;top:746.1px" width="6" height="14" viewBox="0 0 6 14"><rect x="1.1" y="0" width="2.7" height="2.6" rx="0.8" fill="#5f6b77"/><rect x="0" y="5.6" width="3.8" height="1.7" fill="#5f6b77"/><rect x="1.1" y="5.6" width="2.7" height="7.6" fill="#5f6b77"/><rect x="0" y="11.5" width="5" height="1.8" fill="#5f6b77"/></svg>
<div class="a" style="right:583.25px;top:754.2px;font-size:16.9px;line-height:20px;color:#303030;font-weight:400;text-align:right;letter-spacing:0.45px;-webkit-text-stroke:0.15px currentColor">9</div>
<div class="a" style="right:376.54999999999995px;top:754.2px;font-size:16.9px;line-height:20px;color:#303030;font-weight:400;text-align:right;letter-spacing:0.45px;-webkit-text-stroke:0.15px currentColor">1137</div>
<div class="a" style="right:170.5px;top:753.7px;font-size:14.7px;line-height:20px;color:#d3d6da;font-weight:400;text-align:right;">NIL</div>
<div class="a" style="left:351px;width:59px;text-align:center;top:801.9px;font-size:14.5px;line-height:18px;color:#616161">6</div>
<div class="a" style="left:424.5px;top:801.9px;font-size:16.9px;line-height:20px;color:#303030;font-weight:400;letter-spacing:0.45px;-webkit-text-stroke:0.15px currentColor;white-space:pre">Mona Pullover Hoodlie</div>
<div class="a" style="left:812px;top:801.9px;font-size:16.9px;line-height:20px;color:#303030;font-weight:400;letter-spacing:0.45px;-webkit-text-stroke:0.15px currentColor">Orange / L</div>
<div class="a" style="left:1025.5px;top:801.9px;font-size:16.9px;line-height:20px;color:#303030;font-weight:400;letter-spacing:0.45px;-webkit-text-stroke:0.15px currentColor">WH01-L-Orange</div>
<svg class="a" style="left:784.0px;top:793.8px" width="6" height="14" viewBox="0 0 6 14"><rect x="1.1" y="0" width="2.7" height="2.6" rx="0.8" fill="#5f6b77"/><rect x="0" y="5.6" width="3.8" height="1.7" fill="#5f6b77"/><rect x="1.1" y="5.6" width="2.7" height="7.6" fill="#5f6b77"/><rect x="0" y="11.5" width="5" height="1.8" fill="#5f6b77"/></svg>
<svg class="a" style="left:997.6px;top:793.8px" width="6" height="14" viewBox="0 0 6 14"><rect x="1.1" y="0" width="2.7" height="2.6" rx="0.8" fill="#5f6b77"/><rect x="0" y="5.6" width="3.8" height="1.7" fill="#5f6b77"/><rect x="1.1" y="5.6" width="2.7" height="7.6" fill="#5f6b77"/><rect x="0" y="11.5" width="5" height="1.8" fill="#5f6b77"/></svg>
<svg class="a" style="left:1210.6px;top:793.8px" width="6" height="14" viewBox="0 0 6 14"><rect x="1.1" y="0" width="2.7" height="2.6" rx="0.8" fill="#5f6b77"/><rect x="0" y="5.6" width="3.8" height="1.7" fill="#5f6b77"/><rect x="1.1" y="5.6" width="2.7" height="7.6" fill="#5f6b77"/><rect x="0" y="11.5" width="5" height="1.8" fill="#5f6b77"/></svg>
<div class="a" style="right:583.25px;top:801.9px;font-size:16.9px;line-height:20px;color:#303030;font-weight:400;text-align:right;letter-spacing:0.45px;-webkit-text-stroke:0.15px currentColor">1136</div>
<div class="a" style="right:377px;top:801.4px;font-size:14.7px;line-height:20px;color:#d3d6da;font-weight:400;text-align:right;">NIL</div>
<div class="a" style="right:170.04999999999995px;top:801.9px;font-size:16.9px;line-height:20px;color:#303030;font-weight:400;text-align:right;letter-spacing:0.45px;-webkit-text-stroke:0.15px currentColor">1136</div>
<div class="a" style="left:351px;width:59px;text-align:center;top:849.6px;font-size:14.5px;line-height:18px;color:#616161">7</div>
<div class="a" style="left:424.5px;top:849.6px;font-size:16.9px;line-height:20px;color:#303030;font-weight:400;letter-spacing:0.45px;-webkit-text-stroke:0.15px currentColor;white-space:pre">Minerva LumaTech&amp;trade; V-Tee</div>
<div class="a" style="left:812px;top:849.6px;font-size:16.9px;line-height:20px;color:#303030;font-weight:400;letter-spacing:0.45px;-webkit-text-stroke:0.15px currentColor">Blue / L</div>
<div class="a" style="left:1025.5px;top:849.6px;font-size:16.9px;line-height:20px;color:#303030;font-weight:400;letter-spacing:0.45px;-webkit-text-stroke:0.15px currentColor">WS08-L-Blue</div>
<svg class="a" style="left:784.0px;top:841.5px" width="6" height="14" viewBox="0 0 6 14"><rect x="1.1" y="0" width="2.7" height="2.6" rx="0.8" fill="#5f6b77"/><rect x="0" y="5.6" width="3.8" height="1.7" fill="#5f6b77"/><rect x="1.1" y="5.6" width="2.7" height="7.6" fill="#5f6b77"/><rect x="0" y="11.5" width="5" height="1.8" fill="#5f6b77"/></svg>
<svg class="a" style="left:997.6px;top:841.5px" width="6" height="14" viewBox="0 0 6 14"><rect x="1.1" y="0" width="2.7" height="2.6" rx="0.8" fill="#5f6b77"/><rect x="0" y="5.6" width="3.8" height="1.7" fill="#5f6b77"/><rect x="1.1" y="5.6" width="2.7" height="7.6" fill="#5f6b77"/><rect x="0" y="11.5" width="5" height="1.8" fill="#5f6b77"/></svg>
<svg class="a" style="left:1210.6px;top:841.5px" width="6" height="14" viewBox="0 0 6 14"><rect x="1.1" y="0" width="2.7" height="2.6" rx="0.8" fill="#5f6b77"/><rect x="0" y="5.6" width="3.8" height="1.7" fill="#5f6b77"/><rect x="1.1" y="5.6" width="2.7" height="7.6" fill="#5f6b77"/><rect x="0" y="11.5" width="5" height="1.8" fill="#5f6b77"/></svg>
<div class="a" style="right:583.25px;top:849.6px;font-size:16.9px;line-height:20px;color:#303030;font-weight:400;text-align:right;letter-spacing:0.45px;-webkit-text-stroke:0.15px currentColor">1135</div>
<div class="a" style="right:377px;top:849.1px;font-size:14.7px;line-height:20px;color:#d3d6da;font-weight:400;text-align:right;">NIL</div>
<div class="a" style="right:170.5px;top:849.1px;font-size:14.7px;line-height:20px;color:#d3d6da;font-weight:400;text-align:right;">NIL</div>
<div class="a" style="left:351px;width:59px;text-align:center;top:897.3px;font-size:14.5px;line-height:18px;color:#616161">8</div>
<div class="a" style="left:424.5px;top:897.3px;font-size:16.9px;line-height:20px;color:#303030;font-weight:400;letter-spacing:0.45px;-webkit-text-stroke:0.15px currentColor;white-space:pre">Kenobi Trail Jacket</div>
<div class="a" style="left:812px;top:897.3px;font-size:16.9px;line-height:20px;color:#303030;font-weight:400;letter-spacing:0.45px;-webkit-text-stroke:0.15px currentColor">Purple / S</div>
<div class="a" style="left:1025.5px;top:897.3px;font-size:16.9px;line-height:20px;color:#303030;font-weight:400;letter-spacing:0.45px;-webkit-text-stroke:0.15px currentColor">MJ04-S-Purple</div>
<svg class="a" style="left:784.0px;top:889.2px" width="6" height="14" viewBox="0 0 6 14"><rect x="1.1" y="0" width="2.7" height="2.6" rx="0.8" fill="#5f6b77"/><rect x="0" y="5.6" width="3.8" height="1.7" fill="#5f6b77"/><rect x="1.1" y="5.6" width="2.7" height="7.6" fill="#5f6b77"/><rect x="0" y="11.5" width="5" height="1.8" fill="#5f6b77"/></svg>
<svg class="a" style="left:997.6px;top:889.2px" width="6" height="14" viewBox="0 0 6 14"><rect x="1.1" y="0" width="2.7" height="2.6" rx="0.8" fill="#5f6b77"/><rect x="0" y="5.6" width="3.8" height="1.7" fill="#5f6b77"/><rect x="1.1" y="5.6" width="2.7" height="7.6" fill="#5f6b77"/><rect x="0" y="11.5" width="5" height="1.8" fill="#5f6b77"/></svg>
<svg class="a" style="left:1210.6px;top:889.2px" width="6" height="14" viewBox="0 0 6 14"><rect x="1.1" y="0" width="2.7" height="2.6" rx="0.8" fill="#5f6b77"/><rect x="0" y="5.6" width="3.8" height="1.7" fill="#5f6b77"/><rect x="1.1" y="5.6" width="2.7" height="7.6" fill="#5f6b77"/><rect x="0" y="11.5" width="5" height="1.8" fill="#5f6b77"/></svg>
<div class="a" style="right:583.7px;top:896.8px;font-size:14.7px;line-height:20px;color:#d3d6da;font-weight:400;text-align:right;">NIL</div>
<div class="a" style="right:376.54999999999995px;top:897.3px;font-size:16.9px;line-height:20px;color:#303030;font-weight:400;text-align:right;letter-spacing:0.45px;-webkit-text-stroke:0.15px currentColor">1134</div>
<div class="a" style="right:170.04999999999995px;top:897.3px;font-size:16.9px;line-height:20px;color:#303030;font-weight:400;text-align:right;letter-spacing:0.45px;-webkit-text-stroke:0.15px currentColor">1134</div>
<div class="a" style="left:351px;width:59px;text-align:center;top:945.0px;font-size:14.5px;line-height:18px;color:#616161">9</div>
<div class="a" style="left:424.5px;top:945.0px;font-size:16.9px;line-height:20px;color:#303030;font-weight:400;letter-spacing:0.45px;-webkit-text-stroke:0.15px currentColor;white-space:pre">Orion Two-Tone Fitted Jacket</div>
<div class="a" style="left:812px;top:945.0px;font-size:16.9px;line-height:20px;color:#303030;font-weight:400;letter-spacing:0.45px;-webkit-text-stroke:0.15px currentColor">Yellow / XL</div>
<div class="a" style="left:1025.5px;top:945.0px;font-size:16.9px;line-height:20px;color:#303030;font-weight:400;letter-spacing:0.45px;-webkit-text-stroke:0.15px currentColor">MJ07-XL-Yellow</div>
<svg class="a" style="left:784.0px;top:936.9px" width="6" height="14" viewBox="0 0 6 14"><rect x="1.1" y="0" width="2.7" height="2.6" rx="0.8" fill="#5f6b77"/><rect x="0" y="5.6" width="3.8" height="1.7" fill="#5f6b77"/><rect x="1.1" y="5.6" width="2.7" height="7.6" fill="#5f6b77"/><rect x="0" y="11.5" width="5" height="1.8" fill="#5f6b77"/></svg>
<svg class="a" style="left:997.6px;top:936.9px" width="6" height="14" viewBox="0 0 6 14"><rect x="1.1" y="0" width="2.7" height="2.6" rx="0.8" fill="#5f6b77"/><rect x="0" y="5.6" width="3.8" height="1.7" fill="#5f6b77"/><rect x="1.1" y="5.6" width="2.7" height="7.6" fill="#5f6b77"/><rect x="0" y="11.5" width="5" height="1.8" fill="#5f6b77"/></svg>
<svg class="a" style="left:1210.6px;top:936.9px" width="6" height="14" viewBox="0 0 6 14"><rect x="1.1" y="0" width="2.7" height="2.6" rx="0.8" fill="#5f6b77"/><rect x="0" y="5.6" width="3.8" height="1.7" fill="#5f6b77"/><rect x="1.1" y="5.6" width="2.7" height="7.6" fill="#5f6b77"/><rect x="0" y="11.5" width="5" height="1.8" fill="#5f6b77"/></svg>
<div class="a" style="right:583.25px;top:945.0px;font-size:16.9px;line-height:20px;color:#303030;font-weight:400;text-align:right;letter-spacing:0.45px;-webkit-text-stroke:0.15px currentColor">1133</div>
<div class="a" style="right:376.54999999999995px;top:945.0px;font-size:16.9px;line-height:20px;color:#303030;font-weight:400;text-align:right;letter-spacing:0.45px;-webkit-text-stroke:0.15px currentColor">5</div>
<div class="a" style="right:170.04999999999995px;top:945.0px;font-size:16.9px;line-height:20px;color:#303030;font-weight:400;text-align:right;letter-spacing:0.45px;-webkit-text-stroke:0.15px currentColor">1133</div>
<div class="a" style="left:351px;width:59px;text-align:center;top:992.7px;font-size:14.5px;line-height:18px;color:#616161">10</div>
<div class="a" style="left:424.5px;top:992.7px;font-size:16.9px;line-height:20px;color:#303030;font-weight:400;letter-spacing:0.45px;-webkit-text-stroke:0.15px currentColor;white-space:pre">Logan  HeatTec&amp;reg; Tee</div>
<div class="a" style="left:812px;top:992.7px;font-size:16.9px;line-height:20px;color:#303030;font-weight:400;letter-spacing:0.45px;-webkit-text-stroke:0.15px currentColor">Red / S</div>
<div class="a" style="left:1025.5px;top:992.7px;font-size:16.9px;line-height:20px;color:#303030;font-weight:400;letter-spacing:0.45px;-webkit-text-stroke:0.15px currentColor">MS10-S-Red</div>
<svg class="a" style="left:784.0px;top:984.6px" width="6" height="14" viewBox="0 0 6 14"><rect x="1.1" y="0" width="2.7" height="2.6" rx="0.8" fill="#5f6b77"/><rect x="0" y="5.6" width="3.8" height="1.7" fill="#5f6b77"/><rect x="1.1" y="5.6" width="2.7" height="7.6" fill="#5f6b77"/><rect x="0" y="11.5" width="5" height="1.8" fill="#5f6b77"/></svg>
<svg class="a" style="left:997.6px;top:984.6px" width="6" height="14" viewBox="0 0 6 14"><rect x="1.1" y="0" width="2.7" height="2.6" rx="0.8" fill="#5f6b77"/><rect x="0" y="5.6" width="3.8" height="1.7" fill="#5f6b77"/><rect x="1.1" y="5.6" width="2.7" height="7.6" fill="#5f6b77"/><rect x="0" y="11.5" width="5" height="1.8" fill="#5f6b77"/></svg>
<svg class="a" style="left:1210.6px;top:984.6px" width="6" height="14" viewBox="0 0 6 14"><rect x="1.1" y="0" width="2.7" height="2.6" rx="0.8" fill="#5f6b77"/><rect x="0" y="5.6" width="3.8" height="1.7" fill="#5f6b77"/><rect x="1.1" y="5.6" width="2.7" height="7.6" fill="#5f6b77"/><rect x="0" y="11.5" width="5" height="1.8" fill="#5f6b77"/></svg>
<div class="a" style="right:583.25px;top:992.7px;font-size:16.9px;line-height:20px;color:#303030;font-weight:400;text-align:right;letter-spacing:0.45px;-webkit-text-stroke:0.15px currentColor">1132</div>
<div class="a" style="right:376.54999999999995px;top:992.7px;font-size:16.9px;line-height:20px;color:#303030;font-weight:400;text-align:right;letter-spacing:0.45px;-webkit-text-stroke:0.15px currentColor">7</div>
<div class="a" style="right:170.04999999999995px;top:992.7px;font-size:16.9px;line-height:20px;color:#303030;font-weight:400;text-align:right;letter-spacing:0.45px;-webkit-text-stroke:0.15px currentColor">1132</div>
<div class="a" style="left:785.1px;top:1033px;width:2.7px;height:2.6px;background:#5f6b77"></div>
<div class="a" style="left:998.7px;top:1033px;width:2.7px;height:2.6px;background:#5f6b77"></div>
<div class="a" style="left:1211.7px;top:1033px;width:2.7px;height:2.6px;background:#5f6b77"></div>
<div class="a" style="left:387.5px;top:1072.6px;font-size:16.9px;line-height:20px;color:#303030;font-weight:400;-webkit-text-stroke:0.35px currentColor">1328 records</div>
<!--/TABLE-->

<!-- chat bubbles -->
<div class="a" style="left:1888.5px;top:1046px;width:63.5px;height:63.5px;border-radius:50%;background:#7c4dff;box-shadow:0 4px 28px rgba(0,0,0,0.10)"></div>
<svg class="a" style="left:1908px;top:1066px" width="14" height="16" viewBox="0 0 14 16"><path d="M2 8 L6 4 L10 8 L6 12Z" fill="#fff"/></svg>
<div class="a" style="left:1915px;top:1045.5px;width:63.5px;height:63.5px;border-radius:50%;background:#24653a;box-shadow:0 4px 30px rgba(0,0,0,0.12)"></div>
<svg class="a" style="left:1931px;top:1060px" width="32" height="35" viewBox="0 0 32 35"><path d="M5.6 1.6 L25.6 1.6 C27.6 1.6 29 3 29 5 L29 33.4 L22.8 30.6 L5.2 30.6 C3.2 30.6 1.8 29.2 1.8 27.2 L1.8 5 C1.8 3 3.2 1.6 5.6 1.6Z" fill="#fff"/><path d="M6.4 21.8 C12 26.2 19 26.2 24.6 21.8" fill="none" stroke="#24653a" stroke-width="1.8" stroke-linecap="round"/></svg>
</div>
</body></html>
